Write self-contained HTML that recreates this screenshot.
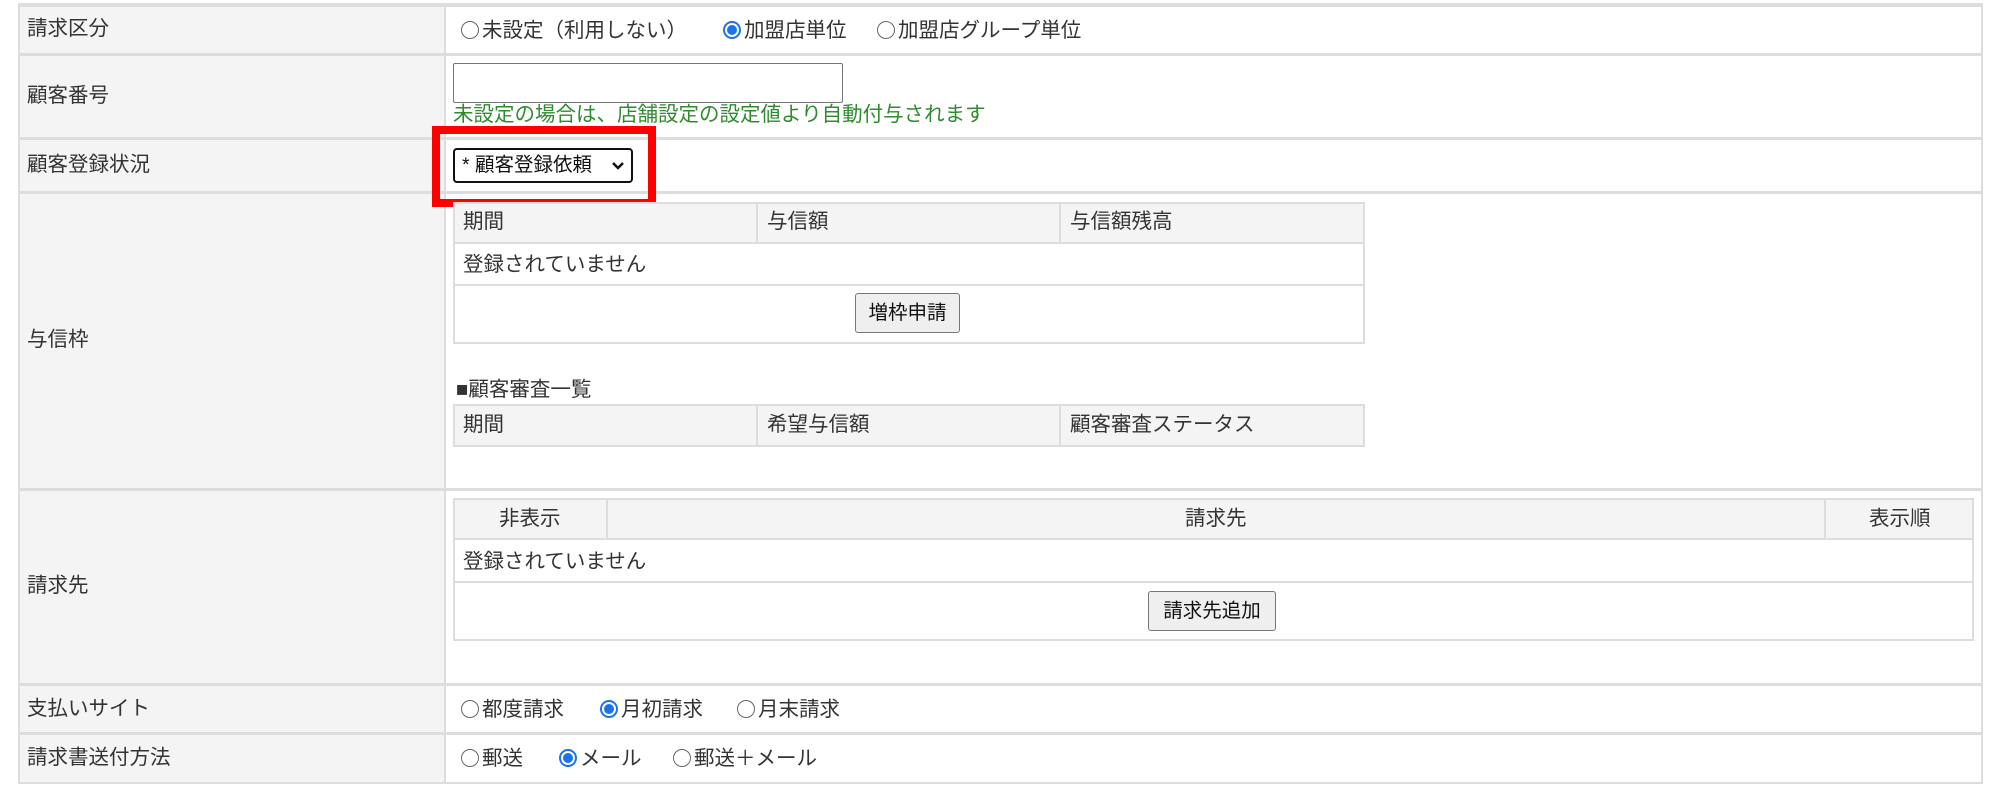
<!DOCTYPE html>
<html><head><meta charset="utf-8"><style>
*{margin:0;padding:0;box-sizing:border-box}
body{width:2000px;height:796px;background:#fff;position:relative;overflow:hidden;font-family:"Liberation Sans","Noto Sans CJK JP",sans-serif;font-size:20.5px;color:#333}
.a{position:absolute}
.lab{position:absolute;left:18px;width:426px;background:#f3f4f3;border:2px solid #ddd;border-right:none}
.val{position:absolute;left:444px;width:1539px;background:#fff;border:2px solid #ddd}
.t{position:absolute;white-space:nowrap;line-height:26px}
.r{position:absolute;width:18px;height:18px;border:1.5px solid #666;border-radius:50%;background:#fff}
.r.on{border:2px solid #1a73e8;}
.r.on::after{content:"";position:absolute;left:2px;top:2px;width:10px;height:10px;border-radius:50%;background:#1a73e8}
.box{position:absolute;border:2px solid #ddd;background:#fff}
.hd{position:absolute;background:#f3f4f3;border:2px solid #ddd}
.btn{position:absolute;border:1px solid #777;border-radius:3px;background:#efefef;text-align:center;line-height:38px;font-size:19.5px;color:#111}
</style></head><body>
<div class="a" style="left:18px;top:0;width:1965px;height:5px;border-bottom:2px solid #ddd"></div>
<div class="lab" style="top:5px;height:50px"></div><div class="val" style="top:5px;height:50px"></div>
<div class="lab" style="top:54px;height:85px"></div><div class="val" style="top:54px;height:85px"></div>
<div class="lab" style="top:138px;height:55px"></div><div class="val" style="top:138px;height:55px"></div>
<div class="lab" style="top:192px;height:298px"></div><div class="val" style="top:192px;height:298px"></div>
<div class="lab" style="top:489px;height:196px"></div><div class="val" style="top:489px;height:196px"></div>
<div class="lab" style="top:684px;height:50px"></div><div class="val" style="top:684px;height:50px"></div>
<div class="lab" style="top:733px;height:51px"></div><div class="val" style="top:733px;height:51px"></div>
<div class="t" style="left:27px;top:16px">請求区分</div>
<div class="t" style="left:27px;top:83px">顧客番号</div>
<div class="t" style="left:27px;top:152px">顧客登録状況</div>
<div class="t" style="left:27px;top:327px">与信枠</div>
<div class="t" style="left:27px;top:573px">請求先</div>
<div class="t" style="left:27px;top:696px">支払いサイト</div>
<div class="t" style="left:27px;top:745px">請求書送付方法</div>
<div class="r" style="left:461px;top:21px"></div><div class="t" style="left:482px;top:18px">未設定（利用しない）</div>
<div class="r on" style="left:723px;top:21px"></div><div class="t" style="left:744px;top:18px">加盟店単位</div>
<div class="r" style="left:877px;top:21px"></div><div class="t" style="left:898px;top:18px">加盟店グループ単位</div>
<div class="a" style="left:453px;top:63px;width:390px;height:40px;border:1px solid #767676;border-radius:2px;background:#fff"></div>
<div class="t" style="left:453px;top:102px;color:#2e8b2e">未設定の場合は、店舗設定の設定値より自動付与されます</div>
<div class="a" style="left:432px;top:126px;width:224px;height:81px;border:8px solid #f00"></div>
<div class="a" style="left:453px;top:148px;width:180px;height:35px;border:2px solid #111;border-radius:4px;background:#fff"></div>
<div class="t" style="left:462px;top:152px;font-size:19.5px;color:#111">* 顧客登録依頼</div>
<svg class="a" style="left:611px;top:160px" width="14" height="12"><path d="M2 3 L7 8 L12 3" stroke="#111" stroke-width="2.5" fill="none"/></svg>
<div class="box" style="left:453px;top:202px;width:912px;height:142px"></div>
<div class="hd" style="left:453px;top:202px;width:912px;height:42px"></div>
<div class="a" style="left:756px;top:202px;width:2px;height:42px;background:#ddd"></div>
<div class="a" style="left:1059px;top:202px;width:2px;height:42px;background:#ddd"></div>
<div class="a" style="left:453px;top:284px;width:912px;height:2px;background:#ddd"></div>
<div class="t" style="left:463px;top:209px">期間</div>
<div class="t" style="left:767px;top:209px">与信額</div>
<div class="t" style="left:1070px;top:209px">与信額残高</div>
<div class="t" style="left:463px;top:252px">登録されていません</div>
<div class="btn" style="left:855px;top:293px;width:105px;height:40px">増枠申請</div>
<div class="t" style="left:456px;top:377px">■顧客審査一覧</div>
<div class="hd" style="left:453px;top:404px;width:912px;height:43px"></div>
<div class="a" style="left:756px;top:404px;width:2px;height:43px;background:#ddd"></div>
<div class="a" style="left:1059px;top:404px;width:2px;height:43px;background:#ddd"></div>
<div class="t" style="left:463px;top:412px">期間</div>
<div class="t" style="left:767px;top:412px">希望与信額</div>
<div class="t" style="left:1070px;top:412px">顧客審査ステータス</div>
<div class="box" style="left:453px;top:498px;width:1521px;height:143px"></div>
<div class="hd" style="left:453px;top:498px;width:1521px;height:42px"></div>
<div class="a" style="left:606px;top:498px;width:2px;height:42px;background:#ddd"></div>
<div class="a" style="left:1824px;top:498px;width:2px;height:42px;background:#ddd"></div>
<div class="a" style="left:453px;top:581px;width:1521px;height:2px;background:#ddd"></div>
<div class="t" style="left:499px;top:506px">非表示</div>
<div class="t" style="left:1185px;top:506px">請求先</div>
<div class="t" style="left:1869px;top:506px">表示順</div>
<div class="t" style="left:463px;top:549px">登録されていません</div>
<div class="btn" style="left:1148px;top:591px;width:128px;height:40px">請求先追加</div>
<div class="r" style="left:461px;top:700px"></div><div class="t" style="left:482px;top:697px">都度請求</div>
<div class="r on" style="left:600px;top:700px"></div><div class="t" style="left:621px;top:697px">月初請求</div>
<div class="r" style="left:737px;top:700px"></div><div class="t" style="left:758px;top:697px">月末請求</div>
<div class="r" style="left:461px;top:749px"></div><div class="t" style="left:482px;top:746px">郵送</div>
<div class="r on" style="left:559px;top:749px"></div><div class="t" style="left:580px;top:746px">メール</div>
<div class="r" style="left:673px;top:749px"></div><div class="t" style="left:694px;top:746px">郵送＋メール</div>
</body></html>
